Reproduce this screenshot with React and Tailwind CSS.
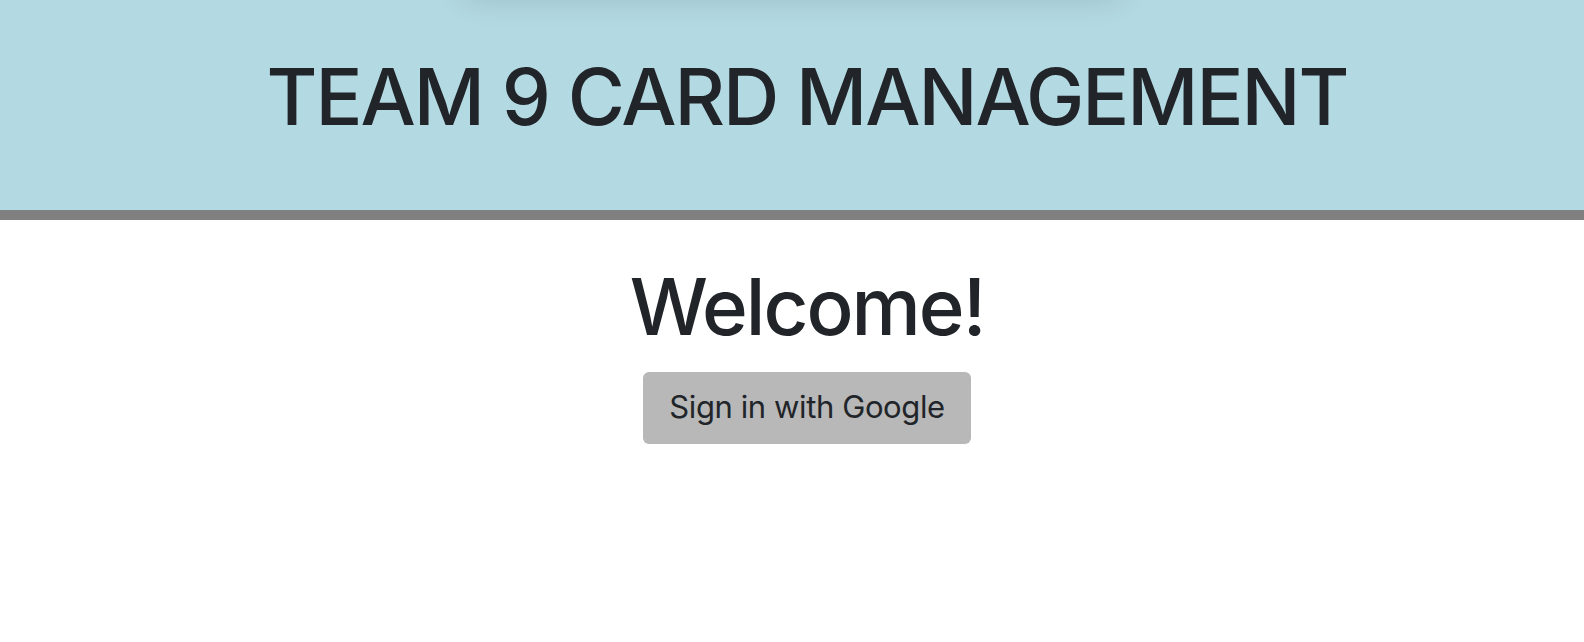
import React from "react";

export default function App() {
  return (
    <div className="min-h-screen bg-white text-[#212529] font-['Inter',sans-serif] pl-[30px]">
      <header className="relative -ml-[30px] overflow-hidden h-[220px] bg-[#b3d9e3] border-b-[10px] border-[#808080] flex justify-center pl-[30px]">
        <div className="absolute left-[460px] right-[460px] -top-[30px] h-[30px] rounded-full shadow-[0_0_30px_rgba(0,0,0,0.12)]" />
        <h1 className="mt-[58px] text-[78px] leading-none font-medium tracking-[-2px]">
          TEAM 9 CARD MANAGEMENT
        </h1>
      </header>
      <main className="flex flex-col items-center">
        <h2 className="mt-[40px] text-[78px] leading-[1.2] font-medium tracking-[-2px]">Welcome!</h2>
        <button className="mt-[18px] h-[72px] px-[26px] rounded-[6px] bg-[#b8b8b8] text-[31px] text-[#212529] tracking-[-0.4px]">
          Sign in with Google
        </button>
      </main>
    </div>
  );
}
